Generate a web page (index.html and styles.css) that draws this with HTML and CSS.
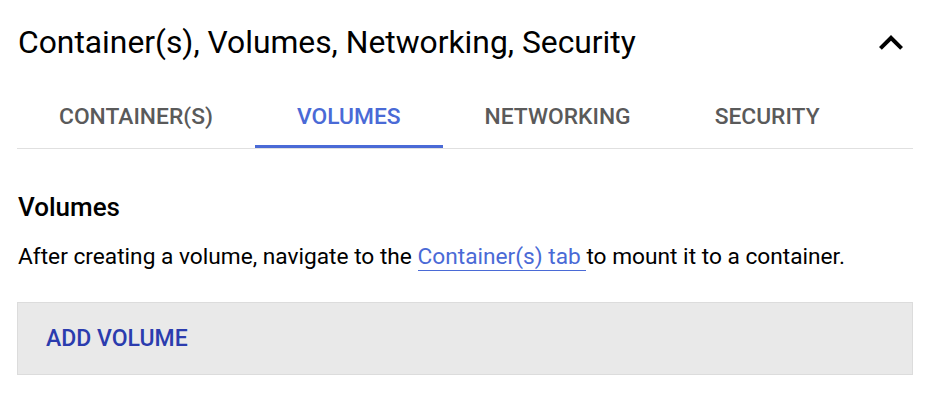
FILE: index.html
```html
<!DOCTYPE html>
<html>
<head>
<meta charset="utf-8">
<link rel="stylesheet" href="styles.css">
</head>
<body>
<div class="panel">
  <div class="header">
    <h1 class="title">Container(s), Volumes, Networking, Security</h1>
    <svg class="chevron" viewBox="0 0 24 24" width="48" height="48"><path d="M12 8l-6 6 1.41 1.41L12 10.83l4.59 4.58L18 14z" fill="#000"/></svg>
  </div>
  <div class="tabs">
    <div class="tab">CONTAINER(S)</div>
    <div class="tab active">VOLUMES</div>
    <div class="tab">NETWORKING</div>
    <div class="tab">SECURITY</div>
  </div>
  <h2 class="section-title">Volumes</h2>
  <p class="desc">After creating a volume, navigate to the <a class="link" href="#">Container(s) tab </a>to mount it to a container.</p>
  <div class="add-box">
    <span class="add-btn">ADD VOLUME</span>
  </div>
</div>
</body>
</html>
```

FILE: styles.css
```css
html, body {
  margin: 0;
  padding: 0;
  background: #fff;
}
body {
  font-family: Roboto, "Liberation Sans", sans-serif;
  color: #000;
}
.panel {
  width: 896px;
  margin-left: 17px;
}
.header {
  display: flex;
  align-items: center;
  justify-content: space-between;
  height: 84px;
  padding-left: 1px;
}
.title {
  margin: 0;
  font-size: 31.8px;
  font-weight: 400;
  line-height: 84px;
  color: #000;
}
.chevron {
  margin-right: -2px;
  margin-top: 2px;
}
.tabs {
  display: flex;
  border-bottom: 1px solid #e0e0e0;
  height: 64px;
}
.tab {
  padding: 0 42px;
  font-size: 22.8px;
  font-weight: 500;
  color: #5a5a5a;
  display: flex;
  align-items: center;
  box-sizing: border-box;
  height: 64px;
}
.tab.active {
  color: #4a6ad6;
  border-bottom: 3px solid #4a6ad6;
  padding-top: 3px;
}
.section-title {
  margin: 43px 0 0 1px;
  font-size: 26px;
  font-weight: 500;
  line-height: 30px;
}
.desc {
  margin: 20px 0 0 1px;
  font-size: 22.7px;
  line-height: 30px;
}
.link {
  color: #4a6ad6;
  text-decoration: none;
  border-bottom: 1px solid #4a6ad6;
}
.add-box {
  margin-top: 30px;
  height: 71px;
  background: #e9e9e9;
  border: 1px solid #dcdcdc;
  display: flex;
  align-items: center;
  padding-left: 28px;
}
.add-btn {
  font-size: 23px;
  font-weight: 500;
  color: #2b3cae;
}
```
